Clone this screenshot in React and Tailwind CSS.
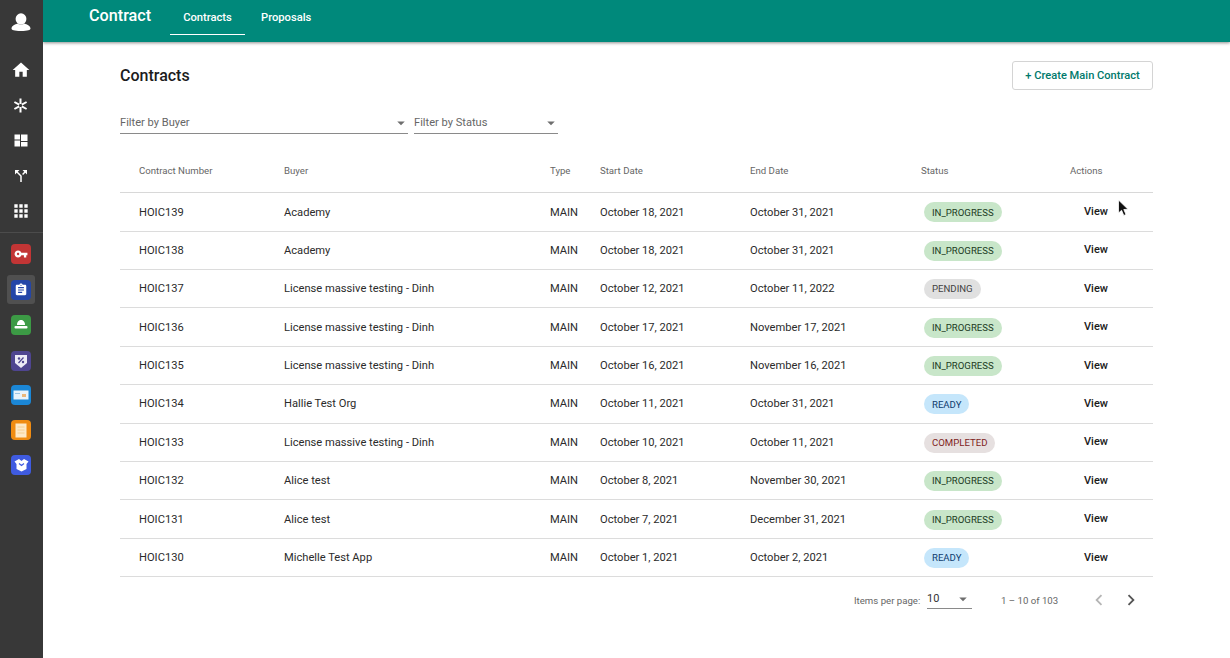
import React from "react";
import {
  MdHome,
  MdCallSplit,
  MdApps,
  MdVpnKey,
  MdAssignment,
  MdArrowDropDown,
  MdChevronLeft,
  MdChevronRight,
} from "react-icons/md";

const rows = [
  ["HOIC139", "Academy", "October 18, 2021", "October 31, 2021", "IN_PROGRESS"],
  ["HOIC138", "Academy", "October 18, 2021", "October 31, 2021", "IN_PROGRESS"],
  ["HOIC137", "License massive testing - Dinh", "October 12, 2021", "October 11, 2022", "PENDING"],
  ["HOIC136", "License massive testing - Dinh", "October 17, 2021", "November 17, 2021", "IN_PROGRESS"],
  ["HOIC135", "License massive testing - Dinh", "October 16, 2021", "November 16, 2021", "IN_PROGRESS"],
  ["HOIC134", "Hallie Test Org", "October 11, 2021", "October 31, 2021", "READY"],
  ["HOIC133", "License massive testing - Dinh", "October 10, 2021", "October 11, 2021", "COMPLETED"],
  ["HOIC132", "Alice test", "October 8, 2021", "November 30, 2021", "IN_PROGRESS"],
  ["HOIC131", "Alice test", "October 7, 2021", "December 31, 2021", "IN_PROGRESS"],
  ["HOIC130", "Michelle Test App", "October 1, 2021", "October 2, 2021", "READY"],
];

const badgeStyles = {
  IN_PROGRESS: "bg-[#c8e6c9] text-[#1b3a1e]",
  PENDING: "bg-[#e0e0e0] text-[#424242]",
  READY: "bg-[#c5e6fb] text-[#0d3c6e]",
  COMPLETED: "bg-[#e6e0e0] text-[#7f1d1d]",
};

// hand drawn, the icon packs have nothing close to these
const Avatar = () => (
  <svg className="absolute left-[11px] top-[13px]" width="20" height="19" viewBox="0 0 20 19" fill="#fff">
    <ellipse cx="10" cy="6" rx="5.4" ry="5.8" />
    <path d="M0.5 15.5 C0.8 12.5 4 11.6 6.5 10.5 C8 12 12 12 13.5 10.5 C16 11.6 19.2 12.5 19.5 15.5 C19.5 17 17 18 10 18 C3 18 0.5 17 0.5 15.5 Z" />
  </svg>
);

const Asterisk = () => (
  <svg width="15" height="15" viewBox="0 0 15 15" stroke="#fff" fill="none">
    <path d="M7.5 0.5v5.5M7.5 9v5.5" strokeWidth="2" />
    <path d="M1.4 4l4.8 2.7M8.8 8.3l4.8 2.7M1.4 11l4.8-2.7M8.8 6.7l4.8-2.7" strokeWidth="2" />
  </svg>
);

const Panels = () => (
  <svg width="14" height="13" viewBox="0 0 14 13" fill="#fff">
    <rect x="0.5" y="0.5" width="5.5" height="5" />
    <rect x="0.5" y="6.5" width="5.5" height="6" />
    <rect x="7" y="0.5" width="6.5" height="6.5" />
    <rect x="7" y="8" width="6.5" height="4.5" />
  </svg>
);

const Dome = () => (
  <svg width="14" height="12" viewBox="0 0 14 12" fill="#fff">
    <path d="M3 6 C3 2.5 5 1 7 1 C9 1 11 2.5 11 6 Z" />
    <rect x="0.5" y="7" width="13" height="2.5" rx="1" />
  </svg>
);

const Shield = () => (
  <svg width="14" height="15" viewBox="0 0 14 15">
    <path d="M1 1 H13 V9 L7 14 L1 9 Z" fill="#eceaf6" />
    <path d="M4.5 9 L9.5 3.5" stroke="#4f4590" strokeWidth="1.2" />
    <circle cx="5" cy="4.5" r="1.2" fill="#4f4590" />
    <circle cx="9" cy="8" r="1.2" fill="#4f4590" />
  </svg>
);

const Ticket = () => (
  <svg width="16" height="10" viewBox="0 0 16 10">
    <rect x="0.5" y="0.5" width="15" height="9" fill="#e8f3fb" />
    <rect x="9" y="4" width="4" height="3" fill="#e9b77c" />
    <rect x="2" y="3" width="5" height="1" fill="#9cc6e6" />
  </svg>
);

const Receipt = () => (
  <svg width="12" height="15" viewBox="0 0 12 15">
    <rect x="0.5" y="0.5" width="11" height="14" fill="#fde9c8" />
    <path d="M2.5 4h7M2.5 7h7M2.5 10h7" stroke="#f3c987" strokeWidth="0.8" />
  </svg>
);

const Box = () => (
  <svg width="15" height="14" viewBox="0 0 15 14" fill="#fff">
    <path d="M0.5 3.5 L5 1 L7.5 3 L10 1 L14.5 3.5 L12.5 6 V11 L7.5 13.5 L2.5 11 V6 Z" />
    <path d="M5 5.5 L7.5 7.5 L10 5.5" stroke="#3f5be0" strokeWidth="1.2" fill="none" />
  </svg>
);

const navIcons = [
  [<MdHome />, "top-[60px] text-[20px]"],
  [<Asterisk />, "top-[95px]"],
  [<Panels />, "top-[130.5px]"],
  [<MdCallSplit />, "top-[166px] text-[18px]"],
  [<MdApps />, "top-[201px] text-[20px]"],
];

const appTiles = [
  [<MdVpnKey />, "top-[244px] bg-[#c23535]"],
  [<MdAssignment />, "top-[280px] bg-[#2446a8]"],
  [<Dome />, "top-[315px] bg-[#3c9a45]"],
  [<Shield />, "top-[351px] bg-[#4f4590]"],
  [<Ticket />, "top-[385px] bg-[#1b87d6]"],
  [<Receipt />, "top-[420px] bg-[#f08c12]"],
  [<Box />, "top-[455px] bg-[#3f5be0]"],
];

function Sidebar() {
  return (
    <div className="absolute left-0 top-0 z-20 h-[658px] w-[43px] bg-[#383838] text-white">
      <Avatar />
      {navIcons.map(([icon, pos], i) => (
        <div key={i} className={`absolute left-[-1px] flex h-[20px] w-[43px] items-center justify-center ${pos}`}>
          {icon}
        </div>
      ))}
      <div className="absolute left-0 top-[232px] h-px w-[43px] bg-[#4c4c4c]" />
      <div className="absolute left-[7px] top-[275px] h-[29px] w-[28px] rounded-[3px] bg-[#505050]" />
      {appTiles.map(([icon, pos], i) => (
        <div key={i} className={`absolute left-[11px] flex h-[20px] w-[20px] items-center justify-center rounded-[4px] text-[14px] text-white ${pos}`}>
          {icon}
        </div>
      ))}
    </div>
  );
}

function Header() {
  return (
    <div className="absolute left-[43px] right-0 top-0 z-10 h-[42px] bg-[#00897b] text-white shadow-[0_1px_3px_rgba(0,0,0,0.45)]">
      <div className="absolute left-[46px] top-[6px] text-[16.2px] font-medium leading-[20px]">Contract</div>
      <div className="absolute left-[127px] top-[1.5px] flex h-[33.5px] w-[75px] items-center justify-center text-[11.2px] font-medium">Contracts</div>
      <div className="absolute left-[127px] top-[34px] h-px w-[75px] bg-white" />
      <div className="absolute left-[218px] top-[1.5px] flex h-[33.5px] items-center text-[11.2px] font-medium">Proposals</div>
    </div>
  );
}

function FilterSelect({ label, className }) {
  return (
    <div className={`absolute top-[112px] flex h-[22px] items-center justify-between border-b border-[#8a8a8a] text-[11.1px] text-[#666] ${className}`}>
      <span className="pt-[2px]">{label}</span>
      <MdArrowDropDown className="mr-[-2px] text-[18px] text-[#6e6e6e]" />
    </div>
  );
}

function Row({ row }) {
  const [num, buyer, start, end, status] = row;
  return (
    <div className="relative h-[38.4px] border-b border-[#dcdcdc] text-[11.15px] text-[#2b2b2b]">
      <span className="absolute left-[19px] top-[11.35px]">{num}</span>
      <span className="absolute left-[164px] top-[11.35px]">{buyer}</span>
      <span className="absolute left-[430px] top-[11.35px]">MAIN</span>
      <span className="absolute left-[480px] top-[11.35px]">{start}</span>
      <span className="absolute left-[630px] top-[11.35px]">{end}</span>
      <span className={`absolute left-[804px] top-[9.2px] flex h-[20px] items-center rounded-full px-[8px] pt-px text-[9.6px] ${badgeStyles[status]}`}>
        {status}
      </span>
      <span className="absolute left-[964px] top-[10.9px] text-[11px] font-medium text-[#1a1a1a]">View</span>
    </div>
  );
}

export default function App() {
  return (
    <div className="relative h-[658px] w-[1230px] overflow-hidden bg-white [font-family:Roboto,sans-serif]">
      <Sidebar />
      <Header />

      <div className="absolute left-[120px] top-[66px] text-[16px] font-medium leading-[20px] text-[#1c1c1c]">Contracts</div>
      <button className="absolute left-[1012px] top-[61px] h-[29px] w-[141px] rounded-[3px] border border-[#d4d4d4] bg-white pt-[1.5px] text-[11.1px] font-medium text-[#00796b]">
        + Create Main Contract
      </button>

      <FilterSelect label="Filter by Buyer" className="left-[120px] w-[288px]" />
      <FilterSelect label="Filter by Status" className="left-[414px] w-[144px]" />

      <div className="absolute left-[120px] top-[150px] w-[1033px]">
        <div className="relative h-[43.2px] border-b border-[#d8d8d8] text-[9.65px] text-[#666]">
          <span className="absolute left-[19px] top-[14px]">Contract Number</span>
          <span className="absolute left-[164px] top-[14px]">Buyer</span>
          <span className="absolute left-[430px] top-[14px]">Type</span>
          <span className="absolute left-[480px] top-[14px]">Start Date</span>
          <span className="absolute left-[630px] top-[14px]">End Date</span>
          <span className="absolute left-[801px] top-[14px]">Status</span>
          <span className="absolute left-[950px] top-[14px]">Actions</span>
        </div>
        {rows.map((row) => (
          <Row key={row[0]} row={row} />
        ))}
      </div>

      <div className="absolute left-[854px] top-[594px] text-[9.65px] text-[#666]">Items per page:</div>
      <div className="absolute left-[927px] top-[590px] flex h-[19px] w-[45px] items-center justify-between border-b border-[#8a8a8a] text-[11px] text-[#333]">
        <span className="pt-[1px]">10</span>
        <MdArrowDropDown className="text-[18px] text-[#6e6e6e]" />
      </div>
      <div className="absolute left-[1001px] top-[594px] text-[9.65px] text-[#666]">1 – 10 of 103</div>
      <MdChevronLeft className="absolute left-[1088px] top-[589px] text-[22px] text-[#b5b5b5]" />
      <MdChevronRight className="absolute left-[1120px] top-[589px] text-[22px] text-[#555]" />

      {/* cursor */}
      <svg className="absolute left-[1117px] top-[199px]" width="13" height="19" viewBox="0 0 13 19">
        <path d="M1.5 1 L1.5 14 L4.6 11.3 L6.8 16.5 L9 15.5 L6.8 10.5 L11 10.3 Z" fill="#111" stroke="#fff" strokeWidth="0.8" />
      </svg>
    </div>
  );
}
